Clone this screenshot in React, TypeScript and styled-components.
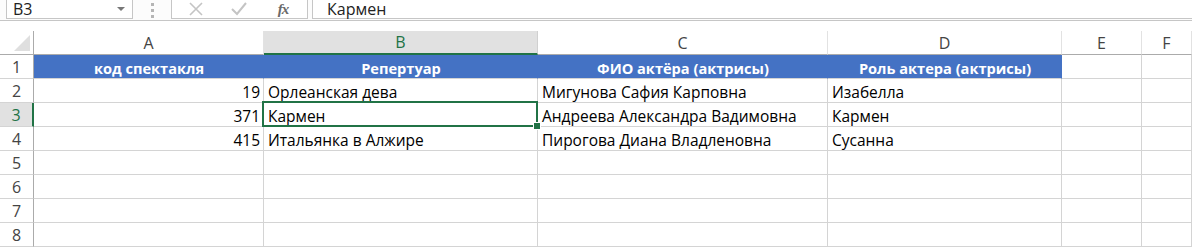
import React from "react";
import styled, { createGlobalStyle, css } from "styled-components";

const GlobalStyle = createGlobalStyle`
  * { box-sizing: border-box; }
  html, body { margin: 0; padding: 0; background: #ffffff; }
  body { font-family: "Open Sans", "Liberation Sans", sans-serif; overflow: hidden; }
`;

const GREEN = "#217346";
const GRID = "#d4d4d4";

const Page = styled.div`
  width: 1192px;
  height: 247px;
  display: flex;
  flex-direction: column;
  background: #ffffff;
`;

const FormulaBar = styled.div`
  height: 21px;
  display: flex;
  align-items: flex-start;
  background: #fcfcfc;
  border-bottom: 1px solid #c6c6c6;
  padding-left: 6px;
`;

const NameBox = styled.div`
  width: 127px;
  height: 20px;
  margin-top: -1px;
  border: 1px solid #c6c6c6;
  background: #ffffff;
  display: flex;
  align-items: center;
  justify-content: space-between;
  padding: 0 7px 0 6px;
  font-size: 16px;
  color: #222;
`;

const DropArrow = styled.span`
  width: 0;
  height: 0;
  border-left: 4px solid transparent;
  border-right: 4px solid transparent;
  border-top: 4px solid #777;
`;

const Grip = styled.div`
  width: 38px;
  height: 20px;
  display: flex;
  flex-direction: column;
  align-items: center;
  justify-content: center;
  gap: 3px;
`;

const GripDot = styled.span`
  width: 3px;
  height: 3px;
  background: #b5b5b5;
`;

const ButtonsBox = styled.div`
  width: 137px;
  height: 20px;
  margin-top: -1px;
  border: 1px solid #c6c6c6;
  background: #ffffff;
  display: flex;
  align-items: center;
  padding-left: 14px;
`;

const IconSlot = styled.span<{ $w: number }>`
  width: ${(p) => p.$w}px;
  display: flex;
  align-items: center;
  justify-content: center;
`;

const Fx = styled.span`
  font-family: "Liberation Serif", "Times New Roman", serif;
  font-style: italic;
  font-weight: bold;
  font-size: 15px;
  color: #6a6a6a;
  letter-spacing: -1px;
`;

const FormulaInput = styled.div`
  flex: 1;
  height: 20px;
  margin-top: -1px;
  margin-left: 4px;
  border: 1px solid #c6c6c6;
  border-right: none;
  background: #ffffff;
  padding-left: 14px;
  font-size: 16px;
  line-height: 18px;
  color: #222;
`;

const Gap = styled.div`
  height: 12px;
`;

const Sheet = styled.div`
  display: grid;
  grid-template-columns: 34px 230px 274px 290px 234px 80px 1fr;
  grid-auto-rows: 24px;
`;

const Corner = styled.div`
  position: relative;
  border-right: 1px solid #ababab;
  border-bottom: 1px solid #ababab;
  background: #ffffff;

  &::after {
    content: "";
    position: absolute;
    right: 3px;
    bottom: 3px;
    width: 0;
    height: 0;
    border-left: 16px solid transparent;
    border-bottom: 16px solid #dfdfdf;
  }
`;

const ColHead = styled.div<{ $sel?: boolean }>`
  display: flex;
  align-items: center;
  justify-content: center;
  font-size: 16px;
  color: #444;
  background: #ffffff;
  border-right: 1px solid #e2e2e2;
  border-bottom: 1px solid #ababab;
  ${(p) =>
    p.$sel &&
    css`
      background: #e1e1e1;
      color: ${GREEN};
      border-bottom: 2px solid ${GREEN};
      border-right-color: #d0d0d0;
    `}
`;

const RowHead = styled.div<{ $sel?: boolean }>`
  display: flex;
  align-items: center;
  justify-content: center;
  font-size: 16px;
  color: #444;
  background: #ffffff;
  border-right: 1px solid #ababab;
  border-bottom: 1px solid ${GRID};
  ${(p) =>
    p.$sel &&
    css`
      background: #e1e1e1;
      color: ${GREEN};
      border-right: 2px solid ${GREEN};
    `}
`;

const Cell = styled.div<{ $head?: boolean; $num?: boolean; $sel?: boolean }>`
  position: relative;
  display: flex;
  align-items: center;
  justify-content: ${(p) => (p.$num ? "flex-end" : "flex-start")};
  padding: 3px 3px 0 4px;
  font-size: 15.5px;
  color: #000;
  white-space: nowrap;
  border-right: 1px solid ${GRID};
  border-bottom: 1px solid ${GRID};
  ${(p) =>
    p.$head &&
    css`
      justify-content: center;
      background: #4472c4;
      color: #ffffff;
      font-weight: bold;
      font-size: 14.6px;
      border-right-color: #4472c4;
    `}
  ${(p) =>
    p.$sel &&
    css`
      &::after {
        content: "";
        position: absolute;
        left: -2px;
        top: -2px;
        right: -1px;
        bottom: -1px;
        border: 2px solid ${GREEN};
        pointer-events: none;
      }
      &::before {
        content: "";
        position: absolute;
        right: -4px;
        bottom: -4px;
        width: 6px;
        height: 6px;
        background: ${GREEN};
        border: 1px solid #ffffff;
        z-index: 2;
      }
    `}
`;

const columns = ["A", "B", "C", "D", "E", "F"];

const rows: { id: string; cells: string[] }[] = [
  { id: "1", cells: ["код спектакля", "Репертуар", "ФИО актёра (актрисы)", "Роль актера (актрисы)", "", ""] },
  { id: "2", cells: ["19", "Орлеанская дева", "Мигунова Сафия Карповна", "Изабелла", "", ""] },
  { id: "3", cells: ["371", "Кармен", "Андреева Александра Вадимовна", "Кармен", "", ""] },
  { id: "4", cells: ["415", "Итальянка в Алжире", "Пирогова Диана Владленовна", "Сусанна", "", ""] },
  { id: "5", cells: ["", "", "", "", "", ""] },
  { id: "6", cells: ["", "", "", "", "", ""] },
  { id: "7", cells: ["", "", "", "", "", ""] },
  { id: "8", cells: ["", "", "", "", "", ""] },
];

export default function App() {
  return (
    <Page>
      <GlobalStyle />
      <FormulaBar>
        <NameBox>
          <span>B3</span>
          <DropArrow />
        </NameBox>
        <Grip>
          <GripDot />
          <GripDot />
          <GripDot />
        </Grip>
        <ButtonsBox>
          <IconSlot $w={20}>
            <svg width="14" height="14" viewBox="0 0 14 14">
              <path d="M1 1 L13 13 M13 1 L1 13" stroke="#c4c4c4" strokeWidth="1.6" fill="none" />
            </svg>
          </IconSlot>
          <IconSlot $w={66}>
            <svg width="16" height="14" viewBox="0 0 16 14">
              <path d="M1 7 L6 12 L15 1" stroke="#c4c4c4" strokeWidth="2" fill="none" />
            </svg>
          </IconSlot>
          <IconSlot $w={22}>
            <Fx>fx</Fx>
          </IconSlot>
        </ButtonsBox>
        <FormulaInput>Кармен</FormulaInput>
      </FormulaBar>
      <Gap />
      <Sheet>
        <Corner />
        {columns.map((c) => (
          <ColHead key={c} $sel={c === "B"}>
            {c}
          </ColHead>
        ))}
        {rows.map((r) => (
          <React.Fragment key={r.id}>
            <RowHead $sel={r.id === "3"}>{r.id}</RowHead>
            {r.cells.map((v, i) => (
              <Cell
                key={i}
                $head={r.id === "1" && i < 4}
                $num={i === 0 && r.id !== "1"}
                $sel={r.id === "3" && i === 1}
              >
                {v}
              </Cell>
            ))}
          </React.Fragment>
        ))}
      </Sheet>
    </Page>
  );
}
